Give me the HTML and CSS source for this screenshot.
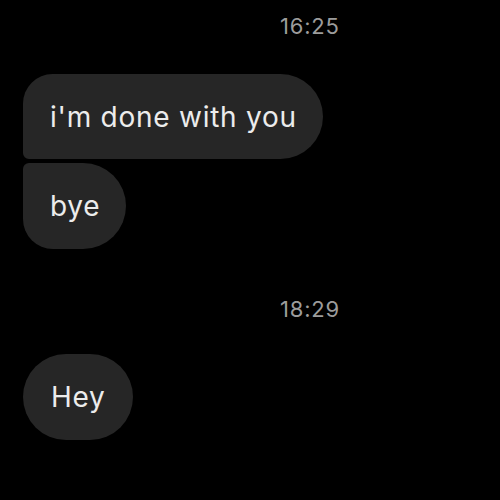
FILE: index.html
```html
<!DOCTYPE html>
<html>
<head>
<meta charset="utf-8">
<link rel="stylesheet" href="styles.css">
</head>
<body>
<div class="chat">
  <div class="time time-first">16:25</div>
  <div class="group">
    <div class="bubble bubble-top">i'm done with you</div>
    <div class="bubble bubble-bottom">bye</div>
  </div>
  <div class="time time-second">18:29</div>
  <div class="group group-last">
    <div class="bubble bubble-single">Hey</div>
  </div>
</div>
</body>
</html>
```
FILE: styles.css
```css
html, body {
  margin: 0;
  padding: 0;
  background: #000;
  width: 500px;
  height: 500px;
  overflow: hidden;
}
.chat {
  display: flex;
  flex-direction: column;
  padding: 13px 0 0 23px;
  font-family: Inter, "Liberation Sans", sans-serif;
}
.time {
  padding-left: 257px;
  font-size: 22px;
  letter-spacing: 0.8px;
  line-height: 26px;
  color: #9c9c9c;
}
.time-second {
  margin-top: 47px;
}
.group {
  display: flex;
  flex-direction: column;
  align-items: flex-start;
  gap: 4px;
  margin-top: 35px;
}
.group-last {
  margin-top: 32px;
}
.bubble {
  background: #262626;
  color: #ececec;
  font-size: 28px;
  letter-spacing: 0.75px;
  line-height: 34px;
  padding: 26px 26px 26px 27px;
  border-radius: 43px;
}
.bubble-top {
  border-radius: 30px 43px 43px 6px;
  padding-bottom: 25px;
}
.bubble-bottom {
  border-radius: 6px 43px 43px 30px;
}
.bubble-single {
  padding-left: 28px;
  padding-right: 27px;
}
```
